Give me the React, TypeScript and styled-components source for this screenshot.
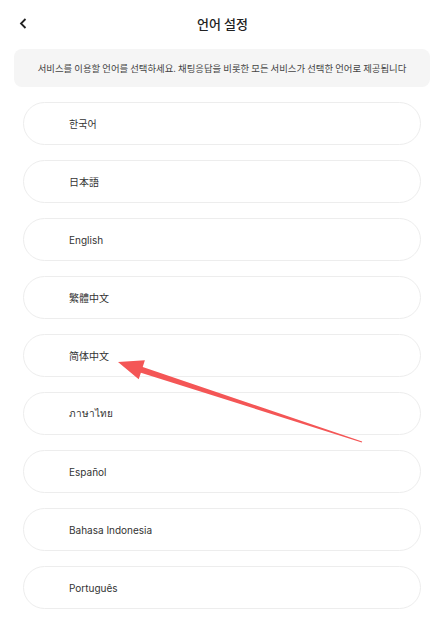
import React from 'react';
import styled, { createGlobalStyle } from 'styled-components';

const GlobalStyle = createGlobalStyle`
  html, body {
    margin: 0;
    padding: 0;
    background: #ffffff;
    font-family: Inter, "Noto Sans", "Noto Sans CJK KR", sans-serif;
    color: #333333;
  }
`;

const Page = styled.div`
  position: relative;
  width: 445px;
  min-height: 622px;
  background: #ffffff;
`;

const Header = styled.header`
  position: relative;
  height: 47px;
  display: flex;
  align-items: center;
  justify-content: center;
`;

const BackButton = styled.button`
  position: absolute;
  left: 16px;
  top: 50%;
  transform: translateY(-50%);
  width: 14px;
  height: 20px;
  padding: 0;
  border: none;
  background: none;
  display: flex;
  align-items: center;
  justify-content: center;
`;

const Title = styled.h1`
  margin: 0;
  font-family: "Noto Sans CJK KR", sans-serif;
  font-size: 13px;
  font-weight: 500;
  color: #222222;
`;

const Notice = styled.div`
  margin: 2px 15px 0 14px;
  height: 38px;
  border-radius: 8px;
  background: #f5f5f5;
  display: flex;
  align-items: center;
  justify-content: center;
  font-family: "Noto Sans CJK KR", sans-serif;
  font-size: 9.4px;
  color: #444444;
  white-space: nowrap;
`;

const List = styled.ul`
  list-style: none;
  margin: 15px 24px 0 23px;
  padding: 0;
  display: flex;
  flex-direction: column;
  gap: 15px;
`;

const Item = styled.li`
  height: 43px;
  box-sizing: border-box;
  border: 1px solid #ededed;
  border-radius: 22px;
  padding-left: 45px;
  display: flex;
  align-items: center;
  font-size: 10px;
  color: #333333;
`;

const Annotation = styled.svg`
  position: absolute;
  left: 0;
  top: 0;
  pointer-events: none;
`;

const languages = [
  '한국어',
  '日本語',
  'English',
  '繁體中文',
  '简体中文',
  'ภาษาไทย',
  'Español',
  'Bahasa Indonesia',
  'Português',
];

const App: React.FC = () => {
  return (
    <Page>
      <GlobalStyle />
      <Header>
        <BackButton aria-label="back">
          <svg width="8" height="11" viewBox="0 0 8 11">
            <path d="M6.5 1 L2 5.5 L6.5 10" fill="none" stroke="#222" strokeWidth="1.8" />
          </svg>
        </BackButton>
        <Title>언어 설정</Title>
      </Header>
      <Notice>서비스를 이용할 언어를 선택하세요. 채팅응답을 비롯한 모든 서비스가 선택한 언어로 제공됩니다</Notice>
      <List>
        {languages.map((lang) => (
          <Item key={lang}>{lang}</Item>
        ))}
      </List>
      <Annotation width="445" height="622" viewBox="0 0 445 622">
        <polygon
          points="118,362 144.9,360.3 142.7,367 362.2,441.4 361.8,442.6 140.9,372.7 138.7,379.3"
          fill="#f45656"
        />
      </Annotation>
    </Page>
  );
};

export default App;
